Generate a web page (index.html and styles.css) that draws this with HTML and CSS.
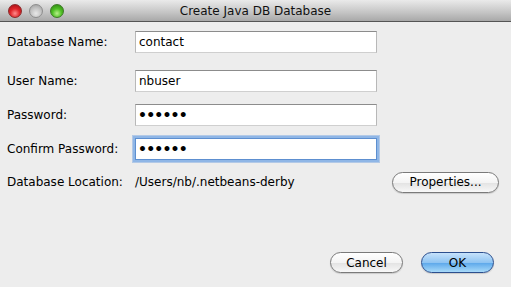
FILE: index.html
```html
<!DOCTYPE html>
<html>
<head>
<meta charset="utf-8">
<link rel="stylesheet" href="styles.css">
</head>
<body>
<div class="window">
  <div class="titlebar">
    <div class="lights">
      <span class="light red"></span>
      <span class="light gray"></span>
      <span class="light green"></span>
    </div>
    <div class="title">Create Java DB Database</div>
  </div>
  <div class="content">
    <div class="row r1">
      <label class="label">Database Name:</label>
      <div class="field">contact</div>
    </div>
    <div class="row r2">
      <label class="label">User Name:</label>
      <div class="field">nbuser</div>
    </div>
    <div class="row r3">
      <label class="label">Password:</label>
      <div class="field dots">••••••</div>
    </div>
    <div class="row r3">
      <label class="label">Confirm Password:</label>
      <div class="field dots focused">••••••</div>
    </div>
    <div class="row loc">
      <label class="label">Database Location:</label>
      <span class="path">/Users/nb/.netbeans-derby</span>
      <button class="btn props">Properties...</button>
    </div>
    <div class="footer">
      <button class="btn cancel">Cancel</button>
      <button class="btn ok">OK</button>
    </div>
  </div>
</div>
</body>
</html>
```

FILE: styles.css
```css
html, body {
  margin: 0;
  padding: 0;
}
body {
  width: 511px;
  height: 287px;
  background: #ededed;
  font-family: "DejaVu Sans", "Liberation Sans", sans-serif;
  font-size: 12px;
  color: #000;
  overflow: hidden;
}
.titlebar {
  position: relative;
  height: 21px;
  border-bottom: 1px solid #555;
  background: linear-gradient(#eaeaea, #c4c4c4 60%, #a8a8a8);
  display: flex;
  align-items: center;
  justify-content: center;
}
.lights {
  position: absolute;
  left: 8px;
  top: 4px;
  display: flex;
  gap: 7px;
}
.light {
  width: 14px;
  height: 14px;
  border-radius: 50%;
  box-sizing: border-box;
}
.red {
  background: radial-gradient(circle at 50% 70%, #ff8d8d 0, #e0262a 45%, #9c0c12 100%);
  border: 1px solid #8a2a2a;
}
.gray {
  background: radial-gradient(circle at 50% 70%, #e8e8e8 0, #c4c4c4 50%, #9a9a9a 100%);
  border: 1px solid #8d8d8d;
}
.green {
  background: radial-gradient(circle at 50% 70%, #b8f08a 0, #4fbf25 45%, #2a7d10 100%);
  border: 1px solid #3d7a26;
}
.title {
  font-size: 12px;
  color: #111;
  margin-top: 1px;
}
.content {
  padding: 9px 0 0 7px;
}
.row {
  display: flex;
  align-items: center;
  height: 22px;
}
.r2 { margin-top: 17px; }
.r3 { margin-top: 12px; }
.label {
  width: 128px;
  flex: none;
}
.field {
  box-sizing: border-box;
  width: 242px;
  height: 22px;
  background: #fff;
  border: 1px solid #b8b8b8;
  border-top-color: #8c8c8c;
  border-bottom-color: #cfcfcf;
  padding: 0 0 0 3px;
  line-height: 20px;
}
.dots {
  font-size: 14px;
  font-weight: bold;
  letter-spacing: -0.8px;
  padding-left: 2px;
}
.focused {
  border-color: #5d8fd0;
  box-shadow: 0 0 0 2px #8fb6e6, 0 0 0 3px rgba(120,165,225,0.5);
}
.loc {
  margin-top: 11px;
  height: 22px;
}
.path {
  flex: 1;
}
.btn {
  font-family: "DejaVu Sans", "Liberation Sans", sans-serif;
  font-size: 12px;
  color: #000;
  height: 21px;
  border-radius: 11px;
  border: 1px solid #7a7a7a;
  background: linear-gradient(#ffffff, #f4f4f4 50%, #e2e2e2 51%, #f8f8f8);
  padding: 0;
  box-shadow: 0 1px 1px rgba(0,0,0,0.15);
}
.props {
  width: 107px;
  margin-right: 12px;
}
.footer {
  display: flex;
  justify-content: flex-end;
  gap: 18px;
  margin-top: 59px;
  padding-right: 17px;
}
.cancel, .ok {
  width: 73px;
}
.ok {
  border-color: #2c4f8e;
  background: linear-gradient(#c6e2fb, #8fc4f2 50%, #5aa6ea 51%, #a8daf9);
}
```
